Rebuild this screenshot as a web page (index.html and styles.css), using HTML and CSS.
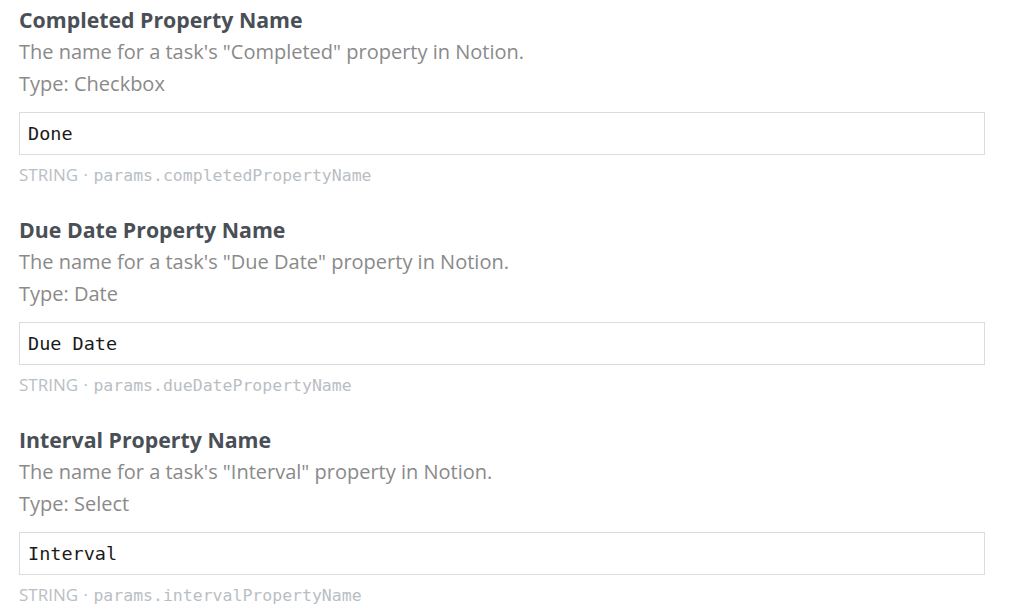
FILE: index.html
```html
<!DOCTYPE html>
<html>
<head>
<meta charset="utf-8">
<link rel="stylesheet" href="styles.css">
</head>
<body>
<div class="fields">
  <div class="field">
    <div class="title">Completed Property Name</div>
    <div class="desc">The name for a task's "Completed" property in Notion.</div>
    <div class="desc">Type: Checkbox</div>
    <div class="input">Done</div>
    <div class="caption">STRING · <span class="code">params.completedPropertyName</span></div>
  </div>
  <div class="field">
    <div class="title">Due Date Property Name</div>
    <div class="desc">The name for a task's "Due Date" property in Notion.</div>
    <div class="desc">Type: Date</div>
    <div class="input">Due Date</div>
    <div class="caption">STRING · <span class="code">params.dueDatePropertyName</span></div>
  </div>
  <div class="field">
    <div class="title">Interval Property Name</div>
    <div class="desc">The name for a task's "Interval" property in Notion.</div>
    <div class="desc">Type: Select</div>
    <div class="input">Interval</div>
    <div class="caption">STRING · <span class="code">params.intervalPropertyName</span></div>
  </div>
</div>
</body>
</html>
```
FILE: styles.css
```css
html, body {
  margin: 0;
  padding: 0;
  background: #ffffff;
}
.fields {
  padding: 4px 39px 0 19px;
  display: flex;
  flex-direction: column;
  gap: 26px;
}
.field {
  display: flex;
  flex-direction: column;
}
.title {
  font-family: "Open Sans", sans-serif;
  font-weight: 700;
  font-size: 21.3px;
  line-height: 32px;
  color: #4a4f56;
}
.desc {
  font-family: "Open Sans", sans-serif;
  font-size: 20px;
  line-height: 32px;
  color: #8a8a8a;
}
.input {
  margin-top: 12px;
  height: 41px;
  border: 1px solid #d8dde2;
  padding: 0 8px;
  display: flex;
  align-items: center;
  font-family: "DejaVu Sans Mono", monospace;
  font-size: 18.5px;
  color: #1a1a1a;
}
.caption {
  margin-top: 8px;
  font-family: "Open Sans", sans-serif;
  font-size: 17px;
  line-height: 24px;
  color: #b9bec4;
  word-spacing: 1px;
}
.code {
  font-family: "DejaVu Sans Mono", monospace;
  font-size: 16.5px;
  word-spacing: 0;
}
```
